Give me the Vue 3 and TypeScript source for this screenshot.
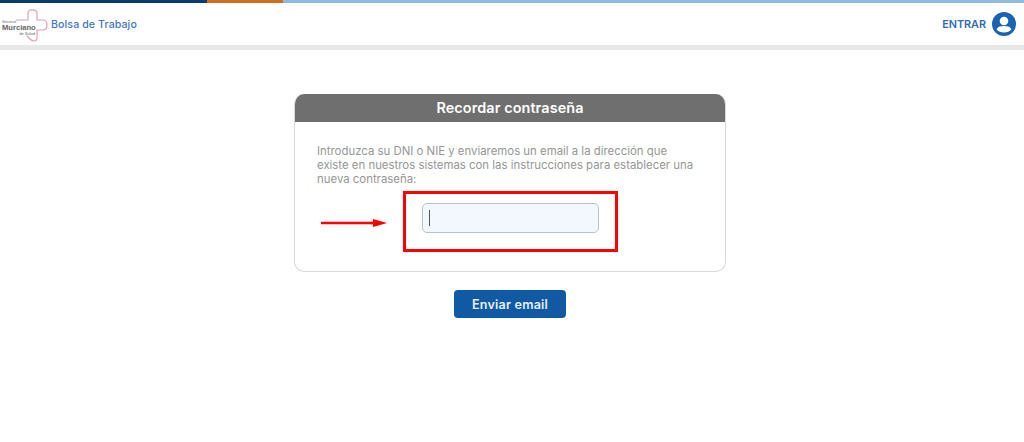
<template>
  <div class="page">
    <div class="stripe">
      <span class="stripe-navy"></span>
      <span class="stripe-orange"></span>
      <span class="stripe-sky"></span>
    </div>

    <header class="topbar">
      <div class="brand">
        <div class="logo">
          <svg class="logo-cross" width="46" height="34" viewBox="0 0 46 34" fill="none">
            <path
              d="M14 11 H26 V4 Q26 0.8 30 0.8 Q35 0.8 35 4 V11 H41 Q45 11 45 16 Q45 21 41 21 H35 V28 Q35 32 32 32 Q30 32 28 30 L25 27"
              stroke="#dba3b6"
              stroke-width="1.2"
              stroke-linecap="round"
              stroke-linejoin="round"
            />
          </svg>
          <div class="logo-text">
            <span class="logo-small">Servicio</span>
            <span class="logo-main">Murciano</span>
            <span class="logo-small logo-end">de Salud</span>
          </div>
        </div>
        <a class="brand-name">Bolsa de Trabajo</a>
      </div>
      <div class="login">
        <span>ENTRAR</span>
        <svg width="24" height="24" viewBox="0 0 24 24">
          <circle cx="12" cy="12" r="12" fill="#1a62b4" />
          <circle cx="12" cy="9" r="4.3" fill="#fff" />
          <path d="M4.5 17.2 C6 14.6 9 14 12 14 C15 14 18 14.6 19.5 17.2 C17.8 19.4 15 20.4 12 20.4 C9 20.4 6.2 19.4 4.5 17.2 Z" fill="#fff" />
        </svg>
      </div>
    </header>

    <main class="content">
      <section class="card">
        <h1 class="card-title">Recordar contraseña</h1>
        <div class="card-body">
          <p class="intro">
            Introduzca su DNI o NIE y enviaremos un email a la dirección que
            existe en nuestros sistemas con las instrucciones para establecer una
            nueva contraseña:
          </p>
          <div class="field-row">
            <svg class="arrow" width="66" height="10" viewBox="0 0 66 10">
              <path d="M0 5 H54" stroke="#ff0000" stroke-width="2.4" />
              <path d="M52 1 L66 5 L52 9 Z" fill="#ff0000" />
            </svg>
            <div class="highlight">
              <div class="input-wrap">
                <input v-model="dni" class="dni-input" type="text" />
                <span class="caret"></span>
              </div>
            </div>
          </div>
        </div>
      </section>
      <button class="send" type="button">Enviar email</button>
    </main>
  </div>
</template>

<script setup lang="ts">
import { ref } from 'vue'

const dni = ref<string>('')
</script>

<style>
html, body {
  background: #fff;
}
</style>

<style scoped>
.page {
  min-height: 442px;
  background: #fff;
  font-family: Inter, "Open Sans", sans-serif;
}
.stripe {
  display: flex;
  height: 3px;
}
.stripe-navy { width: 207px; background: #0b3a70; }
.stripe-orange { width: 76px; background: #cf6f1d; }
.stripe-sky { flex: 1; background: #8fbbdd; }

.topbar {
  height: 42px;
  display: flex;
  align-items: center;
  justify-content: space-between;
  padding: 0 8px 0 2px;
  border-bottom: 5px solid #e8e8e8;
}
.brand {
  display: flex;
  align-items: center;
  gap: 5px;
}
.logo {
  position: relative;
  width: 44px;
  height: 33px;
  margin-top: 2px;
}
.logo-cross {
  position: absolute;
  left: 0;
  top: 0;
}
.logo-text {
  position: absolute;
  left: 0;
  top: 11px;
  display: flex;
  flex-direction: column;
  width: 33px;
  color: #666;
  font-family: "Liberation Sans", sans-serif;
  line-height: 1;
}
.logo-small { font-size: 4px; line-height: 4px; }
.logo-main { font-size: 7.6px; font-weight: 700; line-height: 8px; }
.logo-end { text-align: right; }
.brand-name {
  color: #3f76c4;
  font-size: 10.6px;
  font-weight: 500;
  letter-spacing: 0.1px;
}
.login {
  display: flex;
  align-items: center;
  gap: 6px;
  color: #2f6cb8;
  font-size: 10.8px;
  font-weight: 600;
}

.content {
  display: flex;
  flex-direction: column;
  align-items: center;
  padding: 44px 4px 0 0;
}
.card {
  width: 432px;
  height: 178px;
  box-sizing: border-box;
  border: 1px solid #d9d9d9;
  border-top: none;
  border-radius: 10px;
  overflow: hidden;
}
.card-title {
  margin: 0;
  height: 28px;
  line-height: 27px;
  background: #6f6f6f;
  color: #fff;
  font-size: 14.4px;
  font-weight: 600;
  letter-spacing: 0.1px;
  text-align: center;
}
.card-body {
  padding: 22px 22px 0;
}
.intro {
  margin: 0;
  max-width: 383px;
  color: #969696;
  font-size: 11.4px;
  line-height: 14px;
}
.field-row {
  position: relative;
  display: flex;
  justify-content: center;
  margin-top: 5px;
}
.arrow {
  position: absolute;
  left: 4px;
  top: 27px;
}
.highlight {
  display: flex;
  align-items: flex-start;
  justify-content: center;
  box-sizing: border-box;
  width: 215px;
  height: 61px;
  margin-left: 1px;
  padding-top: 9px;
  border: 3px solid #ff0000;
}
.input-wrap {
  position: relative;
  width: 177px;
  height: 30px;
}
.dni-input {
  display: block;
  width: 100%;
  height: 100%;
  box-sizing: border-box;
  padding: 0 6px;
  background: #f3f8fe;
  border: 1px solid #b9c2cc;
  border-radius: 5px;
  outline: none;
}
.caret {
  position: absolute;
  left: 7px;
  top: 7px;
  width: 1px;
  height: 16px;
  background: #555;
}
.send {
  width: 112px;
  height: 28px;
  margin-top: 18px;
  background: #0f5aa3;
  color: #e8eef5;
  border: none;
  border-radius: 4px;
  font-family: inherit;
  font-size: 12.6px;
  letter-spacing: 0.2px;
  font-weight: 600;
}
</style>
